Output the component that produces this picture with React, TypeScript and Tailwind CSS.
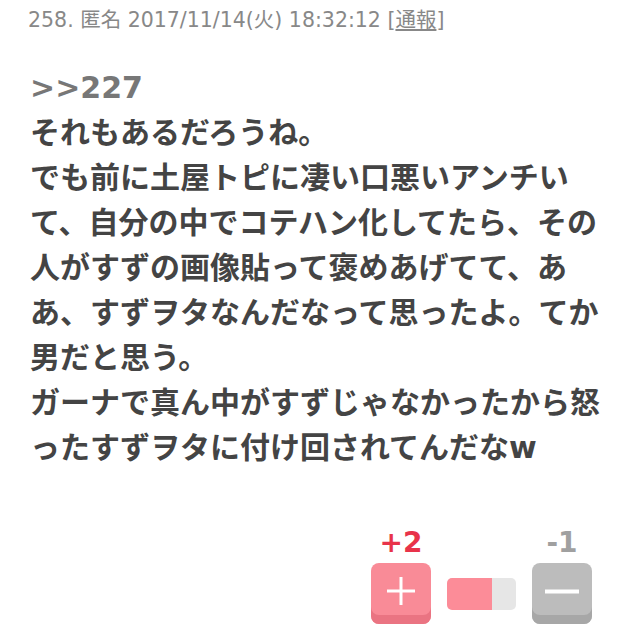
import React from "react";

const lines = [
  "それもあるだろうね。",
  "でも前に土屋トピに凄い口悪いアンチい",
  "て、自分の中でコテハン化してたら、その",
  "人がすずの画像貼って褒めあげてて、あ",
  "あ、すずヲタなんだなって思ったよ。てか",
  "男だと思う。",
  "ガーナで真ん中がすずじゃなかったから怒",
  "ったすずヲタに付け回されてんだなw",
];

const jp = { fontFamily: '"DejaVu Sans", "Noto Sans CJK JP", sans-serif' };

export default function App() {
  return (
    <div className="w-[640px] h-[636px] bg-white overflow-hidden" style={jp}>
      <div className="pl-[28px] pt-[7px] text-[20.5px] leading-[26px] text-[#888]">
        258. 匿名 2017/11/14(火) 18:32:12 [<span className="underline">通報</span>]
      </div>
      <div className="pl-[30px] pt-[32px] font-bold text-[30px] leading-[45px] text-[#444]">
        <div className="text-[#777]">&gt;&gt;227</div>
        {lines.map((l, i) => (
          <div key={i} className="whitespace-nowrap">
            {l}
          </div>
        ))}
      </div>
      <div className="flex justify-end items-end gap-[16px] pr-[48px] pt-[59px]">
        <div className="flex flex-col items-center gap-[6px]">
          <span className="text-[28px] leading-[28px] font-bold text-[#e8334a]">+2</span>
          <button className="w-[60px] h-[61px] rounded-[8px] bg-[#f98b97] shadow-[inset_0_-9px_0_#ea7482] flex items-center justify-center pb-[6px]">
            <svg width="30" height="30" viewBox="0 0 30 30">
              <rect x="1" y="13.5" width="28" height="3" fill="#fff" />
              <rect x="13.5" y="1" width="3" height="28" fill="#fff" />
            </svg>
          </button>
        </div>
        <div className="flex w-[69px] h-[32px] rounded-[5px] overflow-hidden mb-[14px]">
          <div className="w-[45px] bg-[#fc8c98]" />
          <div className="flex-1 bg-[#e6e6e6]" />
        </div>
        <div className="flex flex-col items-center gap-[6px]">
          <span className="text-[28px] leading-[28px] font-bold text-[#a0a0a0]">-1</span>
          <button className="w-[60px] h-[61px] rounded-[8px] bg-[#bcbcbc] shadow-[inset_0_-9px_0_#a7a7a7] flex items-center justify-center pb-[6px]">
            <svg width="34" height="6" viewBox="0 0 34 6">
              <rect x="0" y="1.5" width="34" height="4" fill="#fff" />
            </svg>
          </button>
        </div>
      </div>
    </div>
  );
}
